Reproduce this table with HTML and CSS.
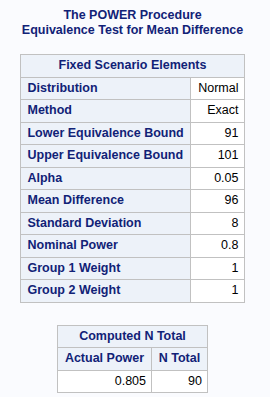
FILE: index.html
```html
<!DOCTYPE html>
<html>
<head>
<meta charset="utf-8">
<link rel="stylesheet" href="styles.css">
</head>
<body>
<div class="page">
  <div class="titles">
    <div>The POWER Procedure</div>
    <div>Equivalence Test for Mean Difference</div>
  </div>
  <table class="tbl fixed">
    <colgroup><col class="c1"><col class="c2"></colgroup>
    <thead>
      <tr><th colspan="2" class="hd">Fixed Scenario Elements</th></tr>
    </thead>
    <tbody>
      <tr><th class="rh">Distribution</th><td>Normal</td></tr>
      <tr><th class="rh">Method</th><td>Exact</td></tr>
      <tr><th class="rh">Lower Equivalence Bound</th><td>91</td></tr>
      <tr><th class="rh">Upper Equivalence Bound</th><td>101</td></tr>
      <tr><th class="rh">Alpha</th><td>0.05</td></tr>
      <tr><th class="rh">Mean Difference</th><td>96</td></tr>
      <tr><th class="rh">Standard Deviation</th><td>8</td></tr>
      <tr><th class="rh">Nominal Power</th><td>0.8</td></tr>
      <tr><th class="rh">Group 1 Weight</th><td>1</td></tr>
      <tr><th class="rh">Group 2 Weight</th><td>1</td></tr>
    </tbody>
  </table>
  <table class="tbl computed">
    <colgroup><col class="d1"><col class="d2"></colgroup>
    <thead>
      <tr><th colspan="2" class="hd">Computed N Total</th></tr>
      <tr><th class="hd">Actual Power</th><th class="hd">N Total</th></tr>
    </thead>
    <tbody>
      <tr><td>0.805</td><td>90</td></tr>
    </tbody>
  </table>
</div>
</body>
</html>
```
FILE: styles.css
```css
html, body {
  margin: 0;
  padding: 0;
  background: #fafbfe;
}
body {
  padding-top: 8px;
  font-family: "Liberation Sans", Arial, sans-serif;
  font-size: 12.5px;
}
.page {
  width: 265px;
  display: flex;
  flex-direction: column;
  align-items: center;
}
.titles {
  color: #112277;
  font-weight: bold;
  text-align: center;
  line-height: 15px;
}
.tbl {
  border-collapse: collapse;
  border: 1px solid #c1c1c1;
  table-layout: fixed;
}
.tbl th, .tbl td {
  border: 1px solid #c1c1c1;
  padding: 3px 5px 3px 6px;
  line-height: 15.5px;
  white-space: nowrap;
}
.tbl th {
  background: #edf2f9;
  color: #112277;
  font-weight: bold;
}
.tbl td {
  background: #ffffff;
  color: #000000;
  text-align: right;
}
.tbl .hd {
  text-align: center;
  padding-left: 5px;
  padding-right: 5px;
}
.tbl .rh {
  text-align: left;
}
.fixed {
  margin-top: 16px;
  width: 223px;
}
.c1 { width: 170px; }
.c2 { width: 53px; }
.computed {
  margin-top: 22px;
  width: 150px;
}
.d1 { width: 94px; }
.d2 { width: 56px; }
```
